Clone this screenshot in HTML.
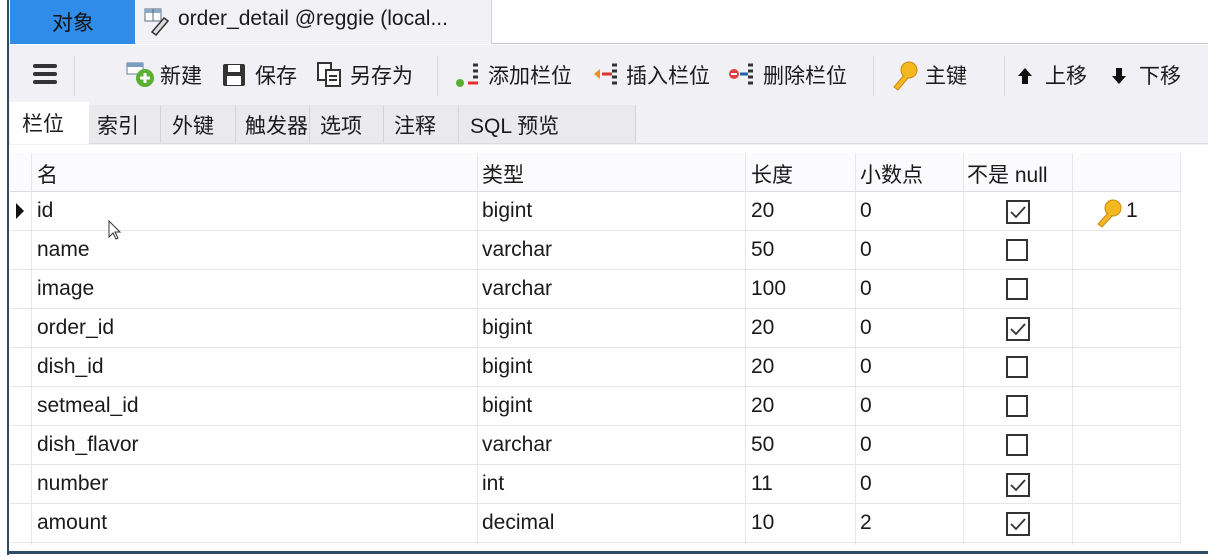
<!DOCTYPE html>
<html><head><meta charset="utf-8"><style>
*{margin:0;padding:0;box-sizing:border-box}
body{width:1208px;height:557px;background:#fff;font-family:"Liberation Sans","Noto Sans CJK SC",sans-serif;color:#1a1a1a;position:relative;overflow:hidden}
.a{position:absolute}
.t{font-size:21px;white-space:nowrap}
.tb{font-size:21px;white-space:nowrap;position:absolute;top:60px}
.cb{position:absolute;width:22px;height:22px;border:2px solid #333;background:#fff}
.vl{position:absolute;width:1px;background:#e6e6ea}
.hl{position:absolute;height:1px;background:#e6e6ea;left:10px;width:1171px}
</style></head><body>
<div class="a" style="left:7px;top:0;width:2px;height:555px;background:#2e4a66"></div>
<div class="a" style="left:7px;top:551px;width:1201px;height:3px;background:#2e4a66"></div>
<div class="a" style="left:9px;top:0;width:1199px;height:44px;background:#fff;border-bottom:1px solid #c8c8cc"></div>
<div class="a" style="left:10px;top:0;width:125px;height:44px;background:#2f8ce8"></div>
<div class="a t" style="left:52px;top:7px;color:#111">对象</div>
<div class="a" style="left:136px;top:0;width:356px;height:44px;background:#f2f2f6;border-right:1px solid #d0d0d4"></div>
<svg class="a" style="left:144px;top:8px" width="28" height="28" viewBox="0 0 28 28"><rect x="1" y="1" width="16" height="12" fill="#fff" stroke="#5a6a7a"/><rect x="1" y="1" width="16" height="4" fill="#8aa8c8"/><line x1="9" y1="1" x2="9" y2="13" stroke="#5a6a7a"/><path d="M8 24 L20 10 L24 13 L12 27 Z" fill="#ddd" stroke="#333" stroke-width="1.5"/></svg>
<div class="a t" style="left:178px;top:7px">order_detail @reggie (local...</div>
<div class="a" style="left:9px;top:45px;width:1199px;height:100px;background:#f0f0f5"></div>
<div class="a" style="left:33px;top:64px;width:24px;height:4px;background:#333;box-shadow:0 8px 0 #333,0 16px 0 #333;border-radius:2px"></div>
<div class="a" style="left:74px;top:56px;width:1px;height:40px;background:#d8d8dc"></div>
<svg class="a" style="left:125px;top:61px" width="32" height="28"><rect x="2" y="2" width="16" height="11" fill="#fff" stroke="#6080a0"/><rect x="2" y="2" width="16" height="4" fill="#7a9cc0"/><circle cx="20" cy="17" r="9" fill="#5ab030"/><path d="M20 12v10M15 17h10" stroke="#fff" stroke-width="3"/></svg>
<div class="tb" style="left:160px">新建</div>
<svg class="a" style="left:221px;top:62px" width="26" height="26"><rect x="2" y="2" width="22" height="22" rx="2" fill="#333"/><rect x="7" y="3" width="12" height="7" fill="#fff"/><rect x="6" y="14" width="14" height="9" fill="#fff"/></svg>
<div class="tb" style="left:255px">保存</div>
<svg class="a" style="left:316px;top:61px" width="28" height="28"><rect x="2" y="2" width="13" height="17" fill="#fff" stroke="#333" stroke-width="2"/><rect x="10" y="9" width="14" height="16" fill="#fff" stroke="#333" stroke-width="2"/><path d="M13 15h8M13 19h8" stroke="#333" stroke-width="2"/></svg>
<div class="tb" style="left:350px">另存为</div>
<div class="a" style="left:437px;top:56px;width:1px;height:40px;background:#d8d8dc"></div>
<svg class="a" style="left:455px;top:61px" width="30" height="28"><circle cx="5" cy="22" r="4" fill="#5ab030"/><path d="M13 22h10" stroke="#e03030" stroke-width="3"/><path d="M18 4h5M18 10h5M18 16h5" stroke="#333" stroke-width="3"/></svg>
<div class="tb" style="left:488px">添加栏位</div>
<svg class="a" style="left:592px;top:61px" width="30" height="28"><path d="M2 13l6-5v10z" fill="#f09020"/><path d="M10 13h10" stroke="#e03030" stroke-width="3"/><path d="M20 4h5M20 10h5M20 16h5M20 22h5" stroke="#333" stroke-width="3"/></svg>
<div class="tb" style="left:626px">插入栏位</div>
<svg class="a" style="left:728px;top:61px" width="30" height="28"><circle cx="6" cy="13" r="5" fill="#e04040"/><path d="M3 13h6" stroke="#fff" stroke-width="2"/><path d="M12 13h8" stroke="#2060b0" stroke-width="3"/><path d="M20 4h5M20 10h5M20 16h5M20 22h5" stroke="#333" stroke-width="3"/></svg>
<div class="tb" style="left:763px">删除栏位</div>
<div class="a" style="left:873px;top:56px;width:1px;height:40px;background:#d8d8dc"></div>
<svg class="a" style="left:890px;top:60px" width="30" height="32"><circle cx="19" cy="10" r="8" fill="#f5b820" stroke="#c88a10"/><path d="M14 15 L4 27 L8 30 L18 18" fill="#f5b820" stroke="#c88a10"/></svg>
<div class="tb" style="left:925px">主键</div>
<div class="a" style="left:1004px;top:56px;width:1px;height:40px;background:#d8d8dc"></div>
<svg class="a" style="left:1016px;top:66px" width="18" height="20"><path d="M9 2L2 10h4v8h6v-8h4z" fill="#111"/></svg>
<div class="tb" style="left:1045px">上移</div>
<svg class="a" style="left:1110px;top:66px" width="18" height="20"><path d="M9 18L2 10h4V2h6v8h4z" fill="#111"/></svg>
<div class="tb" style="left:1139px">下移</div>
<div class="a" style="left:9px;top:143px;width:1199px;height:1px;background:#dcdce0"></div>
<div class="a" style="left:10px;top:102px;width:79px;height:42px;background:#fff"></div>
<div class="a t" style="left:22px;top:108px">栏位</div>
<div class="a" style="left:89px;top:105px;width:546px;height:38px;background:#e9e9ee"></div>
<div class="vl" style="left:160px;top:105px;height:38px;background:#d4d4d8"></div>
<div class="vl" style="left:235px;top:105px;height:38px;background:#d4d4d8"></div>
<div class="vl" style="left:309px;top:105px;height:38px;background:#d4d4d8"></div>
<div class="vl" style="left:383px;top:105px;height:38px;background:#d4d4d8"></div>
<div class="vl" style="left:458px;top:105px;height:38px;background:#d4d4d8"></div>
<div class="vl" style="left:635px;top:105px;height:38px;background:#d4d4d8"></div>
<div class="a t" style="left:97px;top:110px">索引</div>
<div class="a t" style="left:172px;top:110px">外键</div>
<div class="a t" style="left:245px;top:110px">触发器</div>
<div class="a t" style="left:320px;top:110px">选项</div>
<div class="a t" style="left:394px;top:110px">注释</div>
<div class="a t" style="left:470px;top:110px">SQL 预览</div>
<div class="a" style="left:10px;top:153px;width:1171px;height:39px;background:#fbfbfd"></div>
<div class="vl" style="left:31px;top:153px;height:392px"></div>
<div class="vl" style="left:477px;top:153px;height:392px"></div>
<div class="vl" style="left:745px;top:153px;height:392px"></div>
<div class="vl" style="left:855px;top:153px;height:392px"></div>
<div class="vl" style="left:963px;top:153px;height:392px"></div>
<div class="vl" style="left:1072px;top:153px;height:392px"></div>
<div class="vl" style="left:1180px;top:153px;height:392px"></div>
<div class="hl" style="top:191px;background:#dcdce0"></div>
<div class="hl" style="top:230px"></div><div class="hl" style="top:269px"></div><div class="hl" style="top:308px"></div><div class="hl" style="top:347px"></div><div class="hl" style="top:386px"></div><div class="hl" style="top:425px"></div><div class="hl" style="top:464px"></div><div class="hl" style="top:503px"></div><div class="hl" style="top:542px"></div>
<div class="a t" style="left:37px;top:159px">名</div>
<div class="a t" style="left:482px;top:159px">类型</div>
<div class="a t" style="left:751px;top:159px">长度</div>
<div class="a t" style="left:860px;top:159px">小数点</div>
<div class="a t" style="left:967px;top:159px">不是 null</div>
<svg class="a" style="left:15px;top:202px" width="10" height="18"><path d="M1 1L9 9L1 17z" fill="#111"/></svg>
<svg class="a" style="left:108px;top:220px" width="14" height="22"><path d="M1 1v16l4-4 3 6 2-1-3-6h5z" fill="#fff" stroke="#333"/></svg>
<svg class="a" style="left:1094px;top:198px" width="30" height="30"><circle cx="19" cy="10" r="8" fill="#f5b820" stroke="#c88a10"/><path d="M14 15 L4 26 L8 29 L18 18" fill="#f5b820" stroke="#c88a10"/></svg>
<div class="a t" style="left:1126px;top:199px">1</div>
<div class="a t" style="left:37px;top:199px">id</div><div class="a t" style="left:482px;top:199px">bigint</div><div class="a t" style="left:751px;top:199px">20</div><div class="a t" style="left:860px;top:199px">0</div>
<div class="a t" style="left:37px;top:238px">name</div><div class="a t" style="left:482px;top:238px">varchar</div><div class="a t" style="left:751px;top:238px">50</div><div class="a t" style="left:860px;top:238px">0</div>
<div class="a t" style="left:37px;top:277px">image</div><div class="a t" style="left:482px;top:277px">varchar</div><div class="a t" style="left:751px;top:277px">100</div><div class="a t" style="left:860px;top:277px">0</div>
<div class="a t" style="left:37px;top:316px">order_id</div><div class="a t" style="left:482px;top:316px">bigint</div><div class="a t" style="left:751px;top:316px">20</div><div class="a t" style="left:860px;top:316px">0</div>
<div class="a t" style="left:37px;top:355px">dish_id</div><div class="a t" style="left:482px;top:355px">bigint</div><div class="a t" style="left:751px;top:355px">20</div><div class="a t" style="left:860px;top:355px">0</div>
<div class="a t" style="left:37px;top:394px">setmeal_id</div><div class="a t" style="left:482px;top:394px">bigint</div><div class="a t" style="left:751px;top:394px">20</div><div class="a t" style="left:860px;top:394px">0</div>
<div class="a t" style="left:37px;top:433px">dish_flavor</div><div class="a t" style="left:482px;top:433px">varchar</div><div class="a t" style="left:751px;top:433px">50</div><div class="a t" style="left:860px;top:433px">0</div>
<div class="a t" style="left:37px;top:472px">number</div><div class="a t" style="left:482px;top:472px">int</div><div class="a t" style="left:751px;top:472px">11</div><div class="a t" style="left:860px;top:472px">0</div>
<div class="a t" style="left:37px;top:511px">amount</div><div class="a t" style="left:482px;top:511px">decimal</div><div class="a t" style="left:751px;top:511px">10</div><div class="a t" style="left:860px;top:511px">2</div>
<svg class="a" style="left:1006px;top:200px" width="24" height="24"><rect x="1" y="1" width="22" height="22" fill="#fff" stroke="#333" stroke-width="2"/><path d="M5 12l5 5 9-10" fill="none" stroke="#333" stroke-width="1.8"/></svg>
<div class="cb" style="left:1006px;top:239px"></div>
<div class="cb" style="left:1006px;top:278px"></div>
<svg class="a" style="left:1006px;top:317px" width="24" height="24"><rect x="1" y="1" width="22" height="22" fill="#fff" stroke="#333" stroke-width="2"/><path d="M5 12l5 5 9-10" fill="none" stroke="#333" stroke-width="1.8"/></svg>
<div class="cb" style="left:1006px;top:356px"></div>
<div class="cb" style="left:1006px;top:395px"></div>
<div class="cb" style="left:1006px;top:434px"></div>
<svg class="a" style="left:1006px;top:473px" width="24" height="24"><rect x="1" y="1" width="22" height="22" fill="#fff" stroke="#333" stroke-width="2"/><path d="M5 12l5 5 9-10" fill="none" stroke="#333" stroke-width="1.8"/></svg>
<svg class="a" style="left:1006px;top:512px" width="24" height="24"><rect x="1" y="1" width="22" height="22" fill="#fff" stroke="#333" stroke-width="2"/><path d="M5 12l5 5 9-10" fill="none" stroke="#333" stroke-width="1.8"/></svg>
</body></html>
